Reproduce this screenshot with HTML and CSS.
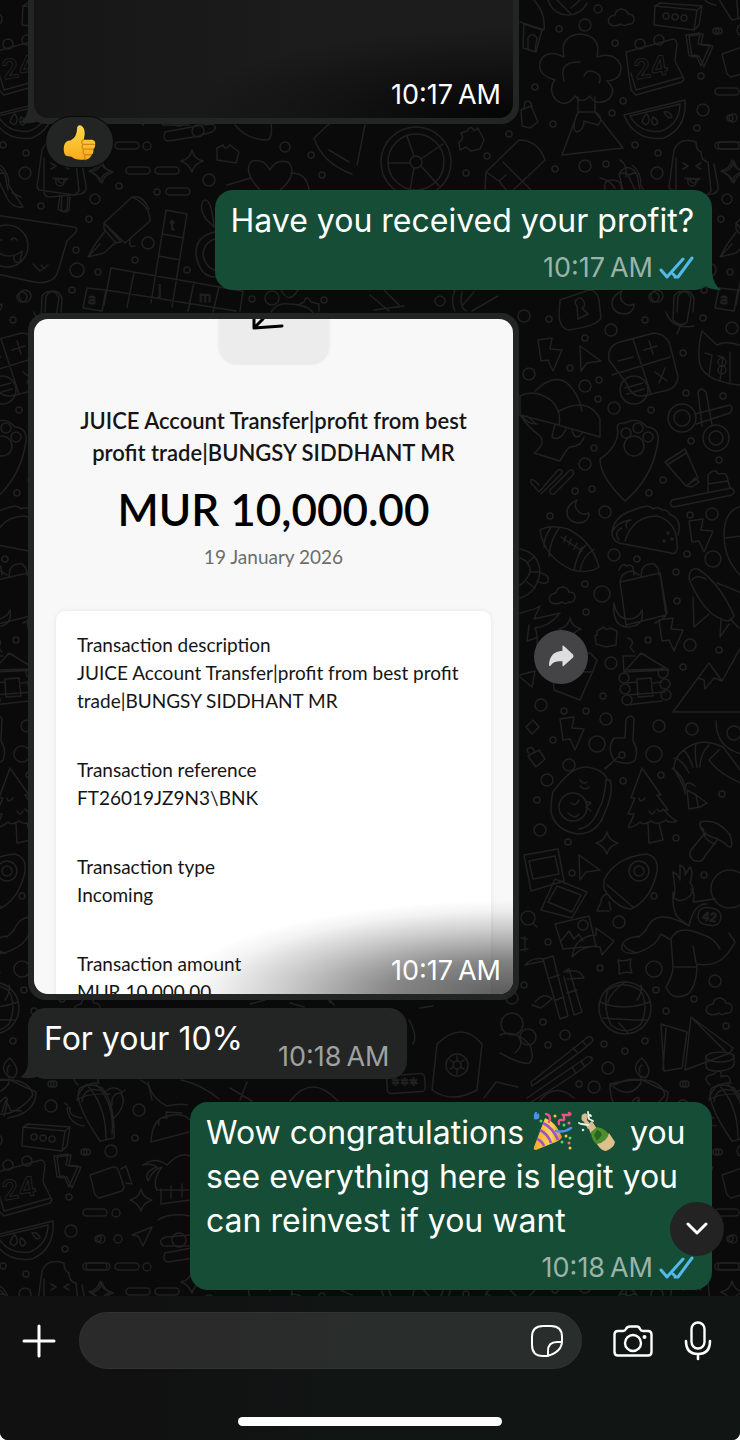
FILE: index.html
```html
<!DOCTYPE html>
<html lang="en">
<head>
<meta charset="utf-8">
<meta name="viewport" content="width=device-width, initial-scale=1">
<title>Chat</title>
<link rel="stylesheet" href="styles.css">
</head>
<body>
<div class="app">
<main class="chat">
<svg class="wallpaper" aria-hidden="true">
<defs>
<path id="bolt" d="M-12-14 2-16 0-5 12-4 3 17-2 6-9 7Z"/>
<path id="spark" d="M0-11Q2-2 11 0Q2 3 0 11Q-3 3-11 0Q-2-2 0-11Z"/>
<path id="cloud" d="M-10 7Q-15 4-11-1Q-8-3-6-3Q-5-9 1-9Q6-8 7-4Q13-4 13 1Q13 7 7 6Q3 9 0 6Q-5 9-10 7Z"/>
<path id="puzzle" d="M-9-6-2-10Q0-6 4-9L11-6 10 8 0 10-10 7-11-1-9-2Z"/>
<path id="cursor" d="M-9-13 12 2-2 4-8 12Z"/>
<rect id="pill" x="-12" y="-4" width="24" height="7" rx="3.5"/>
<path id="moon" d="M-1-12Q-14-6-10 5Q-5 13 6 10Q11 7 11 1Q5 4 1 0Q-5-5-1-12Z"/>
<g id="doodles">
<!-- top band -->
<path d="M534 0Q546 14 544 30L520 22M524 24l18 6-6 22-13-4ZM528 50v-12q4-7 9 0l-2 12M548 0q5 14 19 15q14 0 20-12M557 0l14 14M580 0l-9 8"/>
<use href="#cloud" x="621" y="18"/>
<path d="M655 6l42 4-3 20-40-5ZM697 10l5-4-3 19-5 5M655 6l5-3 42 3"/>
<circle cx="666" cy="16" r="3"/><circle cx="675" cy="17" r="3"/><circle cx="684" cy="18" r="3"/>
<path d="M564 57Q559 36 580 34Q602 36 597 57Q615 51 621 66Q622 80 607 81Q617 90 609 99Q596 107 590 96Q582 105 575 96Q566 109 555 99Q548 88 555 80Q537 75 540 62Q546 48 564 57ZM564 81Q558 61 580 62M584 76Q588 67 598 74Q602 78 599 83M578 97v15M595 97v15M578 112h17L623 148 562 155ZM577 114q-6 16 0 18q7-2 7-11l14 4q6-6-1-12"/>
<path d="M626 52l47-13q3 0 4 5l-2 17 9 18-2 3-46 13-5-5-3-22ZM631 73l5 17 47-13"/>
<circle cx="640" cy="44" r="5"/><circle cx="659" cy="40" r="5"/>
<text x="634" y="77" font-size="27" font-weight="600" transform="rotate(-9 650 68)">24</text>
<use href="#bolt" x="698" y="49"/>
<path d="M722 54l23-8q5 0 6 5l5 15-2 4-23 7-4-3ZM753 48l5-3 6 18-6-1"/>
<path d="M624 115l61-15q2 28-21 38-29 4-40-23ZM630 116l50-12q0 19-18 27-22 3-32-15M642 122q2-7 5-8q5 7-1 11ZM653 117q-3 7 2 8q6-3-2-8M664 112q6-1 8 5-4 3-8-5"/>
<path d="M674 150q5-13 22-8 0 8 5 10 0 9 7 10l3 29-4 4-36-5-2-3ZM692 195l-2 14q6 5 9 0l1-13M683 163l5 3-5 3M701 163l-5 3 5 3M685 178l14 1M688 179q-1 7 4 7 5 0 4-7"/>
<use href="#spark" x="732" y="171"/><use href="#spark" x="192" y="161"/><use href="#spark" x="141" y="79"/>
<use href="#pill" x="727" y="92"/><use href="#pill" x="730" y="146"/><use href="#pill" x="127" y="146"/><use href="#pill" x="138" y="171"/><use href="#pill" x="167" y="171"/><use href="#pill" x="178" y="192"/>
<path d="M485 190l1-18 33-32q19 0 26 20l-38 36M486 172l13 9 8 10M499 181l7-6M503 162l28 28"/>
<circle cx="416" cy="162" r="35"/><circle cx="416" cy="162" r="28"/><circle cx="416" cy="162" r="6"/>
<path d="M414 156l-7-20M421 159l22-15M421 166l18 20M414 168l-4 22M410 163h-22"/>
<path d="M461 133l6-2q4-7 7 0l4-3 6 12-4 9-9 2-5-4-6 3-1-8q6-3 2-9Z"/>
<path d="M521 110l10-4 7 16-8 6-8-2ZM524 108l1-6q5-3 7 4"/>
<path d="M600 178q10 2 15 10M620 160q8 5 6 17M605 190q-2-11 8-10t8 10M619 174q8-13 18 0l-4-1-4 2-5-2ZM619 174l4 16M637 175l3 15"/>
<path d="M165 132l37-7M165 132q-3 8 3 9l32-5M203 125l10-1q5 4-1 8l-11 3"/><circle cx="198" cy="131" r="6"/>
<path d="M235 125q12 15 33 15 5-4 3-16M314 138l15-14M314 138q8 25 38 36M329 150l20 12M365 125l-8 40"/>
<path d="M217 148l6-3q2 6 7 0l9 7-3 11-19-3ZM227 185l24-7M260 190q-18-19-8-29 12-3 18 9 6-11 18-8 11 12-8 28M291 173q16 0 18 17"/>
<path d="M44 158v35q1 4 6 4l30-3q7-1 6-8l-4-22M62 197l-1 13q5 4 8 0l1-13M55 179h13M58 180q3 6 8 0"/>
<use href="#spark" x="102" y="172"/>
<path d="M0 165q9 6 9 21l14 21q-10 2-16-9L-4 175M12 193l9 4"/>
<path d="M104 223l28-26q18 8 18 24l-25 22ZM104 223l17 19-5 1-12-14ZM105 231l-11 15-6 11 16-4 12-11M90 255l10-11M133 197q10-2 16 12M130 240q-2 8 5 6"/>
<path d="M-12 214l86 13q5 1 1 6l-8 8-9 30q-4 14-24 11L-12 272M33 264l7 7 8-6M41 265l4 4"/><circle cx="7" cy="246" r="21"/>
<path d="M-4 240l6 0M11 240q3-4 6 0M-1 253q12 7 23-2M14 256q-1 8 6 6l2-10"/>
<path d="M166 210l21 4-15 93M166 210l-15 93M163 234l21 4M159 256l21 4M111 268l131 23M106 290l130 21M111 268l-7 37M87 288l19 2-4 21-19-3ZM134 273l-7 34M194 282l-6 29M219 287l-6 25M243 291l-3 20"/>
<text x="170" y="230" font-size="14">t</text><text x="158" y="295" font-size="14">j</text><text x="88" y="304" font-size="14">a</text><text x="199" y="302" font-size="14">m</text>
<path d="M203 201q8-6 11 26l-8-8q-7-10-3-18M215 232q-20 4-19 23 4 22 19 22M215 239q-12 4-12 17 4 13 12 14M45 312l1-16q5-8 13-3l3 5-1 14"/>
<path d="M271 312q6-10 18-8 20 1 24 9M300 304l4-2q3-8 7 0l8 2v7M281 290q8 15 17 0"/><circle cx="272" cy="298" r="7"/>
<path d="M370 295l19 16M384 290l15 15M374 310l30-4M455 290q-5 12 0 21M462 292q-3 15 4 19M474 292l-12 14M498 296l-26 15"/>
<path d="M560 300l29-10q8 0 10 10l2 18q-4 8-32 12-9-1-10-15ZM576 300q5-5 8 2 2 4-2 6l6 6-10 5-1-13q-3-3-1-6"/><use href="#moon" x="623" y="303"/>
<path d="M674 296q5-7 14-3l3 5-4 24q-6 6-14-2ZM666 312q6 18 28 14M680 327l-3 7"/>
<!-- right column -->
<use href="#bolt" x="550" y="354"/><use href="#cursor" x="589" y="359"/>
<path d="M620 342l34-9q14 1 17 16l7 28q-1 10-10 13l-25 6q-12 1-16-12L609 360q-2-14 11-18ZM633 339l18 55M612 375l58-18M618 361l15-4M644 350l13-4M649 341l4 13M655 372l12 9M665 368l-6 15M625 388l18-5M627 394l17-5"/><circle cx="634" cy="390" r="14"/>
<path d="M702 331l15 14q10-5 25 1M702 331q-4 14-3 27 0 23 41 27M705 353l7 2-3 20M718 356l5 1-3 24M730 352v32"/><circle cx="722" cy="362" r="4"/><circle cx="722" cy="370" r="4"/>
<path d="M520 396q15-8 32 5 10 11 7 24L520 415ZM535 391q29-28 45 12l2 8M559 411q29-15 41 8l0 18-42-12M520 415q8 12 20 21 6 8-6 17l26 8q7-13 10-14 12-1 14-10M527 416l9 8M555 424l-3 13q8 5 14-8M572 430q3 12 10 3M522 416q7 9 15 8"/>
<path d="M618 431q-3-9 7-8 13-7 22 4 15 1 10 20-6 32-32 54-25-24-25-42 17-11 18-28"/><circle cx="634" cy="446" r="10"/><circle cx="626" cy="433" r="5"/><circle cx="638" cy="428" r="5"/><circle cx="648" cy="437" r="5"/>
<circle cx="682" cy="418" r="14"/><circle cx="682" cy="418" r="8"/><circle cx="716" cy="438" r="13"/><circle cx="716" cy="438" r="7"/>
<path d="M695 414l35-9q4 3 0 8l-34 11M702 426l-4-34q3-6 8 0l6 33"/>
<path d="M665 462l20-13 13 29-12 8ZM667 465l19-12M687 486l8-8 4 4-7 5Z"/>
<path d="M672 500l59-12q6 3 1 7l-58 12q-6-2-2-7M708 492v-17q7-8 10-1 9-2 9 3l3 11M708 484l20-3"/>
<path d="M531 483l8 9 19-22q5-1 4 3l-21 21M531 483q-1-6 4-2l4 4M550 490l20-20q5 0 3 5l-19 19q-5 1-4-4"/>
<use href="#moon" x="578" y="512"/>
<path d="M540 530q10-6 28-1 24 12 31 38-10 7-27 3-28-13-32-40ZM559 528q-9 13-10 28M551 527q-8 13-7 20M594 549q-12 8-14 22M586 545q-9 8-12 25M561 537l21 14M566 536l-2 6M571 539l-2 6M577 543l-3 6M582 547l-3 6"/>
<path d="M625 541q8-25 32-25 22 6 20 34-2 5-6 3l-47-9q-12-1-12-12 2-14 16-20l14-5q8-2 11 2 6-3 9 1 7 0 7 4 14 5 9 21M612 532q5-10 18-12M619 540q-6-8 3-12M627 528q-3-6 4-8"/><circle cx="668" cy="533" r="1"/><circle cx="664" cy="541" r="1"/><circle cx="672" cy="539" r="1"/>
<use href="#bolt" x="701" y="535"/>
<path d="M520 549q19 4 20 23-3 21-20 26M520 558q11 4 10 14-4 10-10 13M530 572l9 0M527 563l7-6M527 582l8 6M541 573q9 2 7 9-5 3-11-1M742 506q-18 4-18 29 0 25 18 42M724 538l18-2"/>
<use href="#cloud" x="562" y="596"/>
<path d="M620 582l40-9 6 42-40 10ZM660 573l7 40q-2 6-12 10M620 582q1-10 12-11l7 4M619 570l2-4q4-3 5 0 5-2 7 1l1 8M641 577q0-15 13-13 5 3 5 11M614 603q3 17 16 16 9-1 12-9 3 16-14 17-16 0-14-24"/>
<path d="M689 579q0-12 9-10 22 14 36 47-5 8-12 3-18-5-33-40M692 580q4-6 14-1M717 583l25 10M693 597l1 30 15-13M721 620l-1 17 9-13M730 619l9 9"/>
<path d="M520 613q14-3 20-7l-6 13 26-6q-11 14-25 15 3 6 2 18M529 625l-2 16 9-3M520 675l15-4-3 16-12-10"/>
<use href="#spark" x="570" y="629"/><use href="#puzzle" x="606" y="637"/><use href="#bolt" x="671" y="634"/>
<path d="M552 668l2 22 26 10 12-27 5-13-7-7-12 2 M555 671l38 1"/>
<path d="M624 672l17-19 28 17ZM624 672l-1-16 12 0M628 638q8 3 2 9l4 5M637 679l14-1 2 18-15 1ZM628 670l35-1M627 683l10-1M653 683l9-1M627 695l38-3M626 705l36-4"/><circle cx="624" cy="678" r="5"/><circle cx="663" cy="673" r="5"/><circle cx="625" cy="689" r="5"/><circle cx="665" cy="684" r="5"/><circle cx="627" cy="700" r="5"/><circle cx="666" cy="695" r="5"/>
<path d="M673 712l36-49 13 18 20-36M673 712h69M698 678l6 2 1 9 9-11 8 3"/>
<use href="#bolt" x="572" y="733"/><use href="#bolt" x="69" y="1171"/>
<path d="M526 727l7-7 6 7-7 7ZM528 756l11-6 6 9-9 8ZM529 753q-4-3 0-5t5 3"/>
<path d="M625 738l1-19q5-6 8 0l-1 22q6 9 2 19-5 6-20 1-9-12-1-23ZM618 757l-13 12M614 761l-9 7"/><circle cx="622" cy="755" r="3"/>
<path d="M553 792q18-26 34-25 18 3 20 13l3 0q4 12-5 32-7 22-28 22-22-4-26-22 0-13 2-20ZM606 780q-1 18-7 29-7 18-20 20M580 780q3 5 7 2M580 786q5 5 9 1"/><circle cx="573" cy="807" r="14"/><path d="M571 803q5 4 8-3M568 813q7 7 11 1M585 801l6 2-5 4 5 4"/>
<path d="M642 768l19 27-4 0 11 15-4 0q8 9 13 11-8 3-11-1-9 6-15 1-8 5-11 1-7 6-12 5 5-9 6-13l-6 0 7-16-4 0ZM648 824l1 19 14-3-4-17M639 798q1 6 6 0M649 811q3 6 6 0M657 809q4 5 6 0"/>
<path d="M695 786q-11-9-10 8 0-7-11-25 0-15 16-23 14-8 33 1l18 24M672 768q9 5 14 20M674 758q8 1 15 15M684 750q5 6 9 17M696 744q-2 9 1 23M709 745q-9 9-9 22M719 750l-10 10q10 14 32 23M687 790l9 5 11 8-7 4-11 2ZM696 795l2 11M716 721q0 27 26 33"/>
<path d="M700 822q18-4 30 13 4 13-1 12-7-7-17-10-13-5-12-15ZM705 833l-14 17q-3 6 2 10 9 4 12-4l13-17M703 828q0 12 12 16"/>
<use href="#spark" x="607" y="843"/><use href="#cursor" x="588" y="868"/>
<path d="M524 855l34-6 6 32-33 10ZM529 861l26-5 4 18-26 5ZM555 879l32 13-15 26-31-8ZM557 886l24 9-9 17-24-10Z"/>
<path d="M604 880q11-23 43-26 14 4 9 22-7 25-25 33-15-1-27-20ZM607 885l26 22M607 894q-6 2-6 8M601 902l-4 9 12 0M609 902l2 8"/><circle cx="639" cy="871" r="10"/><circle cx="639" cy="871" r="5"/>
<circle cx="528" cy="918" r="7"/><path d="M533 923l4 4M555 924l34-8 7 30-33 3ZM561 941l8-10 5 8 5-5 4 7M572 957q3-21 24-22l0-7 18 13-12 14-2-8q-16-3-28 10M521 938l6 1M525 937v14M520 950l8-1"/><circle cx="583" cy="925" r="5"/>
<path d="M618 960q6 2 13-1-2 7 1 14-6-2-13 1 1-7-1-14"/>
<path d="M675 890l-2-18q5 2 7 8l0-15q6 2 5 10l5-8q4 4 0 16 6 5 0 13-10 8-16 2ZM673 892q-1 23 8 28l8 6q5-23 18-22M691 889q5 4 2 13l22-3M689 926q-34-20-43 4l-7 7M640 936q-20 2-18 14 11 9 32-6 5-5 7-10l10 6M624 945q3 6 14 8M671 939q7-15 30-5 14 4 19 15M671 939l2 28q0 8-7 20 6 15 22 7 9-9 9-30 25 5 38-22l-6-9M673 967h24M696 963l-3-17"/><circle cx="730" cy="889" r="19"/><rect x="698" y="908" width="23" height="17" rx="8" transform="rotate(10 709 916)"/><text x="702" y="921" font-size="12" transform="rotate(10 709 916)">42</text>
<path d="M525 965q7-8 19-6l9-3 15 60-8 3-17-60M550 978l9-3M525 965l19-4M556 1000l8-3M564 972l5-3 13 43-8 3-10-38M567 993l10-3M567 972q12-4 17 6l-17 1M535 1002q10-11 17-3l-11 9-9-3"/>
<circle cx="625" cy="1008" r="26"/><path d="M608 990q16-11 33 1 8 15 0 33-14 13-30 1-9-19-3-35ZM600 1002q22 10 50 0M603 1018q24 2 44 2M625 982q-15 11-17 20M637 1000q6-9 4-15M619 1023l9 10"/>
<use href="#cloud" x="719" y="1007"/>
<path d="M661 1024l26 8-5 36-18 3ZM666 1028l-3 42M691 1017l42 31-3 5-45 17ZM692 1018l33 33M706 1056v11q3 5 15 4 14-2 13-9v-7"/><ellipse cx="720" cy="1057" rx="14" ry="5"/>
<path d="M531 1082l57-45q4-1 5 3-1 5-61 46ZM527 1098l60-41q6-1 5 3-4 7-64 44M573 1048l5 5M582 1041l5 5M572 1067l4 6M581 1061l4 6"/>
<path d="M640 1076q-10-9 2-18 12 13 3 20ZM640 1073q-2-6 2-8M610 1084q16-4 31-4l4 0q17 2 20 15M610 1084q19 17 31-1v-7M610 1085q0 24 17 29 21 3 38-19"/>
<path d="M710 1085q-8-8 0-10l4-1q8-8 7 3 10-4 9 6M709 1100q4-18 22-17M709 1100q9-7 33-6"/>
<path d="M500 1035q15-6 30 10 5 14-1 18-7 2-29-10M515 1053q9-8 4-16"/><circle cx="512" cy="1024" r="11"/><circle cx="528" cy="1037" r="8"/>
<!-- lower left -->
<path d="M80 1088q10-6 22 0 13 15 12 50l-14 3Q72 1100 80 1088ZM86 1084q20 20 20 55M96 1084q19 20 16 50M82 1118q-14-2-12-10l-3 0q2 16 17 18M112 1105q-1-12 9-12 7 12-8 26M121 1093l4-3M68 1106l-3-3"/>
<path d="M0 1102q12-14 4 14M-18 1085q14-8 28-5 13 6 26 12 0 21-28 26M2 1112l4-12 5 11q6-1 10 0"/>
<path d="M141 1080l8 6q4 13 18 20 14-3 20-1M151 1142q1-24 17-26 16-4 22 4M151 1142l38-10M159 1125q-2-9 8-7l-1-6 16 1M181 1080q20 4 38 19"/>
<path d="M143 1165q12-9 24 0 13-14 23-9M143 1165q9-2 14 2-14 5-9 14 5-12 14-14-10 13-5 23h32M161 1189l0 15 29-4M171 1186v12M182 1184v13M158 1220q12-8 32-4"/>
<path d="M132 1235l20-8-9 19-5-10Z"/><use href="#pill" x="95" y="1267"/>
<path d="M190 1235l-24 2q-9 3-3 9l26 0"/><circle cx="179" cy="1240" r="7"/>
<!-- beneath the picture message -->
<path d="M250 1004l15-4M290 1003l14 4M330 1003q-4-9 4 2M420 1008l13-2M409 1020q9 16 4 24M437 1044q25-24 45 0l-5 46q-25 14-45 0ZM457 1056v5M464 1060l-4 3M464 1069l-4-2M457 1074v-5M450 1069l4-2M450 1060l4 3"/>
<circle cx="457" cy="1065" r="4"/><circle cx="457" cy="1065" r="11"/>
<rect x="387" y="1075" width="38" height="18" rx="4" transform="rotate(-4 400 1084)"/><text x="391" y="1092" font-size="18">***</text>
<path d="M82 1102q2-18 23-10 9-8 17 0M148 1082l4 18M230 1088l22 13M240 1100l7-18M290 1101q22-28 48 0M484 1098l12-16 22 5M540 1100q16-18 34-2"/>
<!-- confetti bubbles -->
<g>
<circle cx="585" cy="25" r="6"/><circle cx="598" cy="9" r="4"/><circle cx="559" cy="29" r="3"/><circle cx="615" cy="43" r="3"/><circle cx="535" cy="87" r="3"/><circle cx="553" cy="124" r="3"/><circle cx="623" cy="101" r="3"/><circle cx="612" cy="113" r="3"/><circle cx="701" cy="76" r="3"/><circle cx="703" cy="110" r="6"/><circle cx="697" cy="128" r="3"/><circle cx="730" cy="118" r="3"/><circle cx="716" cy="31" r="3"/><circle cx="635" cy="145" r="3"/><circle cx="658" cy="153" r="3"/><circle cx="585" cy="166" r="6"/><circle cx="606" cy="164" r="3"/><circle cx="657" cy="173" r="6"/><circle cx="555" cy="169" r="3"/><circle cx="509" cy="134" r="3"/><circle cx="487" cy="156" r="3"/><circle cx="466" cy="173" r="3"/><circle cx="727" cy="199" r="5"/>
<circle cx="147" cy="146" r="4"/><circle cx="119" cy="186" r="3"/><circle cx="157" cy="192" r="3"/><circle cx="209" cy="180" r="6"/><circle cx="285" cy="147" r="5"/><circle cx="311" cy="155" r="3"/><circle cx="322" cy="175" r="3"/><circle cx="41" cy="206" r="3"/><circle cx="89" cy="219" r="3"/><circle cx="76" cy="250" r="3"/><circle cx="148" cy="243" r="6"/><circle cx="135" cy="260" r="3"/><circle cx="77" cy="270" r="7"/><circle cx="98" cy="272" r="3"/><circle cx="72" cy="290" r="3"/><circle cx="25" cy="296" r="6"/><circle cx="187" cy="270" r="3"/><circle cx="252" cy="299" r="3"/><circle cx="324" cy="300" r="3"/><circle cx="440" cy="301" r="5"/><circle cx="654" cy="297" r="5"/>
<circle cx="524" cy="316" r="6"/><circle cx="549" cy="319" r="3"/><circle cx="611" cy="330" r="6"/><circle cx="645" cy="320" r="3"/><circle cx="703" cy="318" r="3"/><circle cx="732" cy="328" r="6"/><circle cx="585" cy="338" r="3"/><circle cx="683" cy="353" r="3"/><circle cx="529" cy="374" r="6"/><circle cx="570" cy="368" r="3"/><circle cx="585" cy="386" r="6"/><circle cx="599" cy="380" r="3"/><circle cx="598" cy="399" r="3"/><circle cx="614" cy="408" r="6"/><circle cx="651" cy="410" r="3"/><circle cx="686" cy="393" r="3"/><circle cx="723" cy="396" r="3"/><circle cx="594" cy="448" r="3"/><circle cx="585" cy="464" r="6"/><circle cx="691" cy="441" r="3"/><circle cx="719" cy="460" r="3"/><circle cx="663" cy="480" r="3"/><circle cx="575" cy="491" r="3"/><circle cx="592" cy="489" r="3"/><circle cx="649" cy="493" r="3"/><circle cx="550" cy="516" r="3"/><circle cx="605" cy="512" r="6"/><circle cx="690" cy="515" r="3"/><circle cx="712" cy="514" r="6"/><circle cx="614" cy="555" r="6"/><circle cx="637" cy="559" r="3"/><circle cx="687" cy="554" r="3"/><circle cx="713" cy="559" r="8"/><circle cx="585" cy="584" r="3"/><circle cx="602" cy="594" r="8"/><circle cx="676" cy="572" r="3"/><circle cx="677" cy="601" r="3"/><circle cx="586" cy="612" r="3"/><circle cx="648" cy="640" r="3"/><circle cx="690" cy="645" r="6"/><circle cx="719" cy="650" r="3"/><circle cx="611" cy="663" r="6"/><circle cx="683" cy="667" r="3"/>
<circle cx="541" cy="705" r="6"/><circle cx="603" cy="696" r="3"/><circle cx="564" cy="711" r="3"/><circle cx="586" cy="711" r="3"/><circle cx="606" cy="719" r="6"/><circle cx="659" cy="726" r="6"/><circle cx="692" cy="729" r="6"/><circle cx="553" cy="740" r="3"/><circle cx="597" cy="744" r="8"/><circle cx="654" cy="754" r="8"/><circle cx="734" cy="733" r="7"/><circle cx="569" cy="765" r="6"/><circle cx="547" cy="780" r="6"/><circle cx="537" cy="800" r="3"/><circle cx="623" cy="781" r="3"/><circle cx="661" cy="775" r="3"/><circle cx="722" cy="794" r="3"/><circle cx="540" cy="830" r="6"/><circle cx="568" cy="842" r="3"/><circle cx="676" cy="838" r="3"/><circle cx="572" cy="873" r="3"/><circle cx="654" cy="896" r="3"/><circle cx="704" cy="875" r="3"/><circle cx="619" cy="922" r="6"/><circle cx="548" cy="942" r="3"/><circle cx="600" cy="968" r="3"/><circle cx="654" cy="969" r="8"/><circle cx="715" cy="981" r="6"/><circle cx="656" cy="990" r="3"/><circle cx="694" cy="999" r="3"/><circle cx="524" cy="985" r="3"/><circle cx="512" cy="998" r="6"/><circle cx="666" cy="1011" r="3"/><circle cx="543" cy="1022" r="3"/><circle cx="565" cy="1035" r="5"/><circle cx="548" cy="1045" r="3"/><circle cx="604" cy="1044" r="3"/><circle cx="645" cy="1041" r="3"/><circle cx="625" cy="1051" r="3"/><circle cx="726" cy="1026" r="3"/><circle cx="608" cy="1068" r="6"/><circle cx="579" cy="1084" r="3"/><circle cx="594" cy="1087" r="6"/><circle cx="683" cy="1084" r="3"/>
<circle cx="54" cy="1084" r="3"/><circle cx="51" cy="1106" r="6"/><circle cx="139" cy="1110" r="6"/><circle cx="135" cy="1138" r="3"/><circle cx="87" cy="1152" r="3"/><circle cx="111" cy="1151" r="6"/><circle cx="116" cy="1213" r="4"/><circle cx="101" cy="1239" r="4"/><circle cx="118" cy="1239" r="4"/>
</g>
</g>
</defs>
<use href="#doodles" x="-632" y="-1121"/><use href="#doodles" y="-1121"/><use href="#doodles" x="632" y="-1121"/>
<use href="#doodles" x="-632"/><use href="#doodles"/><use href="#doodles" x="632"/>
<use href="#doodles" x="-632" y="1121"/><use href="#doodles" y="1121"/>
</svg>

<article class="photo-message photo-message--first">
  <div class="photo-bubble photo-bubble--cut">
    <div class="photo photo--dark"><time class="time time--photo">10:17&#8239;AM</time></div>
    <svg class="tail tail--in" viewBox="0 0 20 18" aria-hidden="true"><path d="M8 0Q8 12 0 16Q8 19 20 15Z"/></svg>
  </div>
  <button class="reaction" type="button" aria-label="Thumbs up reaction">
    <svg viewBox="0 0 36 38" aria-hidden="true">
      <defs><linearGradient id="skin" x1="0" y1="0" x2="0" y2="1"><stop offset="0" stop-color="#ffd94a"/><stop offset="1" stop-color="#f7ab1c"/></linearGradient></defs>
      <path fill="url(#skin)" d="M15 3Q16 0 19 1Q23 3 23 10L22 16L31 16Q35 17 34 21Q34 25 32 26Q33 31 30 32Q29 37 23 37Q13 38 9 34L3 33Q0 30 1 23Q2 17 8 17Q15 13 15 3Z"/>
      <path fill="none" stroke="#d9880f" stroke-width="1.4" stroke-linecap="round" d="M22 16Q18 18 21 21H33M21 21Q19 25 22 26H32M22 26Q20 30 23 32H30M23 32Q22 35 24 37"/>
    </svg>
  </button>
</article>

<article class="bubble bubble--out">
  <p class="text">Have you received your profit?</p>
  <p class="meta"><time class="time">10:17&#8239;AM</time>
    <svg class="ticks" role="img" aria-label="Read" viewBox="0 0 35 24"><path d="M2 14L8 21L24 3M16 21L19 21L33 2M14 18L17 21"/></svg></p>
  <svg class="tail tail--out" viewBox="0 0 20 18" aria-hidden="true"><path d="M11 0Q12 12 20 18Q10 18 4 14L0 18Z"/></svg>
</article>

<article class="photo-message photo-message--row">
  <div class="photo-bubble">
    <div class="photo receipt">
      <div class="receipt-icon"><svg viewBox="0 0 34 12" aria-hidden="true"><path d="M3 0V9L31 7M3 9L12 0"/></svg></div>
      <h2 class="receipt-title">JUICE Account Transfer|profit from best profit trade|BUNGSY SIDDHANT MR</h2>
      <p class="receipt-amount">MUR 10,000.00</p>
      <p class="receipt-date">19 January 2026</p>
      <dl class="receipt-card">
        <div><dt>Transaction description</dt><dd>JUICE Account Transfer|profit from best profit trade|BUNGSY SIDDHANT MR</dd></div>
        <div><dt>Transaction reference</dt><dd>FT26019JZ9N3\BNK</dd></div>
        <div><dt>Transaction type</dt><dd>Incoming</dd></div>
        <div><dt>Transaction amount</dt><dd>MUR 10,000.00</dd></div>
      </dl>
      <time class="time time--photo">10:17&#8239;AM</time>
    </div>
  </div>
  <button class="forward" type="button" aria-label="Forward">
    <svg viewBox="0 0 28 26" aria-hidden="true"><path d="M15 2.500Q15 1 16.500 2L26 11Q27 12.500 26 14L16.500 22.500Q15 24 15 22V18Q6 17 2.500 22.500Q1 24 1 21Q2 8 15 7Z"/></svg>
  </button>
</article>

<article class="bubble bubble--in">
  <p class="text">For your 10%</p>
  <time class="time">10:18&#8239;AM</time>
  <svg class="tail tail--in" viewBox="0 0 20 18" aria-hidden="true"><path d="M8 0Q8 12 0 16Q8 19 20 15Z"/></svg>
</article>

<article class="bubble bubble--out">
  <p class="text">Wow congratulations <svg class="emoji" role="img" aria-label="Party popper" viewBox="0 0 40 40">
    <defs><linearGradient id="cone" x1="0" y1="0" x2="1" y2="0"><stop offset="0" stop-color="#f5a623"/><stop offset=".6" stop-color="#ffd65a"/><stop offset="1" stop-color="#e58f1c"/></linearGradient></defs>
    <path fill="url(#cone)" d="M12 7Q23 11 29 26Q27 30 20 32L3 39Q0 39 1 36Z"/>
    <path fill="none" stroke="#9a56c9" stroke-width="2.600" d="M10 12Q20 17 25 29M7 19Q15 23 18 32M4 28Q9 30 11 35"/>
    <path fill="none" stroke="#ee5584" stroke-width="2.400" stroke-linecap="round" d="M13 3Q19 4 16 11M26 13Q25 8 29 9T30 4L36 4Q39 3 36 2"/>
    <path fill="none" stroke="#4c92ea" stroke-width="2.400" stroke-linecap="round" d="M3 2Q0 7 5 4Q6 8 2 7M23 20Q31 22 38 17"/>
    <g fill="#f6c944"><circle cx="22" cy="5" r="1.500"/><circle cx="33" cy="25" r="1.500"/><circle cx="37" cy="37" r="1.500"/></g>
    <g fill="#5bd06d"><circle cx="8" cy="10" r="1.500"/><circle cx="31" cy="14" r="1.500"/><circle cx="37" cy="27" r="1.500"/><circle cx="29" cy="31" r="1.500"/></g>
    <g fill="#ef6a90"><circle cx="36" cy="12" r="1.500"/><circle cx="36" cy="32" r="1.500"/></g>
  </svg><svg class="emoji emoji--bottle" role="img" aria-label="Champagne bottle" viewBox="0 0 40 40">
    <path fill="#d6bc8d" d="M5 4Q9 0 11 5L10 9L15 15L11 18L7 11Q3 9 5 4Z"/>
    <path fill="#d9bd8c" d="M10 14L15 10L20 18L14 23Z"/>
    <path fill="#4f8d2f" d="M14 21L20 16Q29 18 33 25L22 35Q14 30 14 21Z"/>
    <path fill="#2b641f" d="M17 24L20 19Q24 20 25 24L20 30Z"/>
    <path fill="#dcc18d" d="M20 33Q30 31 32 22L38 31Q37 37 29 40Q24 40 20 33Z"/>
    <path fill="none" stroke="#eef4e8" stroke-width="1.800" stroke-linecap="round" d="M11 1L12 8L16 10M5 13L11 14M2 12L4 13M13 4L14 5"/>
    <circle cx="6" cy="19" r="1.300" fill="#d8e8d8"/>
  </svg> you see everything here is legit you can reinvest if you want</p>
  <p class="meta"><time class="time">10:18&#8239;AM</time>
    <svg class="ticks" role="img" aria-label="Read" viewBox="0 0 35 24"><path d="M2 14L8 21L24 3M16 21L19 21L33 2M14 18L17 21"/></svg></p>
</article>

<button class="scroll-down" type="button" aria-label="Scroll to latest">
  <svg viewBox="0 0 22 14" aria-hidden="true"><path d="M2 2L11 11L20 2"/></svg>
</button>
</main>

<footer class="composer">
  <form class="composer-row">
    <button class="icon-button" type="button" aria-label="Attach"><svg width="34" height="34" viewBox="0 0 34 34"><path d="M17 2V32M2 17H32" stroke-width="3"/></svg></button>
    <div class="field">
      <input type="text" aria-label="Message">
      <button class="icon-button" type="button" aria-label="Stickers"><svg width="32" height="32" viewBox="0 0 32 32"><path d="M31 16V12Q31 1 20 1H12Q1 1 1 12V20Q1 31 12 31H16Q31 27 31 16ZM17 31V26Q17 17 26 17H31" stroke-width="2"/></svg></button>
    </div>
    <div class="actions">
      <button class="icon-button" type="button" aria-label="Camera"><svg width="40" height="32" viewBox="0 0 40 32"><path d="M5 6H10Q12 6 13 4Q14 1.500 17 1.500H24Q26 1.500 27 4Q28 6 30 6H35Q38.500 6 38.500 9.500V27Q38.500 30.500 35 30.500H5Q1.500 30.500 1.500 27V9.500Q1.500 6 5 6Z" stroke-width="2.400"/><circle cx="20" cy="18" r="8" stroke-width="2.400"/><circle cx="31.500" cy="12" r="1" stroke-width="2"/></svg></button>
      <button class="icon-button" type="button" aria-label="Voice message"><svg width="28" height="40" viewBox="0 0 28 40"><rect x="7.500" y="1.500" width="13" height="26" rx="6.500" stroke-width="2.400"/><path d="M2 20Q2 33 14 33Q26 33 26 20M14 33V38" stroke-width="2.600"/></svg></button>
    </div>
  </form>
  <div class="home-indicator"></div>
</footer>
</div>
</body>
</html>
```
FILE: styles.css
```css
* { box-sizing: border-box; }
html { background: #fff; }
body { margin: 0; font-family: Inter, "Liberation Sans", sans-serif; color: #fff; }
p, h2, dl, dd { margin: 0; }
button { border: 0; padding: 0; background: none; color: inherit; font: inherit; cursor: pointer; }
svg { display: block; }

.app {
  display: flex;
  flex-direction: column;
  min-height: 100vh;
  overflow: hidden;
  background: #0a0a0a;
  border-radius: 0 0 8px 8px;
}

.chat {
  position: relative;
  flex: 1;
  display: flex;
  flex-direction: column;
  align-items: flex-start;
  padding: 0 28px 6px;
  overflow: hidden;
}
.wallpaper {
  position: absolute;
  inset: 0;
  width: 100%;
  height: 100%;
  fill: none;
  stroke: #212121;
  stroke-width: 1.5;
  stroke-linejoin: round;
  stroke-linecap: round;
  font-family: Inter, sans-serif;
}
.wallpaper text { stroke-width: 1; }

.bubble {
  position: relative;
  max-width: 522px;
  padding: 9px 18px 6px 16px;
  border-radius: 18px;
}
.bubble--out { align-self: flex-end; background: #154d37; }
.bubble--in { display: flex; align-items: flex-end; gap: 35px; margin: 8px 0 23px; background: #232524; }
.bubble--in .text { padding-bottom: 12px; }
.text { font-size: 32px; line-height: 44px; }
.meta { display: flex; justify-content: flex-end; align-items: center; gap: 6px; margin-top: 9px; }
.time { font-size: 27px; line-height: 32px; color: #a0a1a1; }
.bubble--out .time { color: #9bb3a8; }
.ticks { width: 35px; height: 24px; fill: none; stroke: #53b9e8; stroke-width: 3; stroke-linecap: round; stroke-linejoin: round; }

.tail { position: absolute; width: 20px; height: 18px; bottom: 0; }
.tail--in { left: -8px; fill: #232524; }
.tail--out { right: -9px; fill: #154d37; }

.emoji { display: inline-block; width: 40px; height: 40px; vertical-align: -7px; }
.emoji--bottle { margin-left: 4px; margin-right: 4px; }

.photo-message { position: relative; display: flex; max-width: 100%; }
.photo-message--first { flex-direction: column; align-items: flex-start; margin-bottom: 23px; }
.photo-message--row { align-items: center; gap: 15px; margin-top: 23px; }
.photo-bubble { position: relative; padding: 6px; border-radius: 18px; background: #232524; width: 491px; }
.photo-bubble--cut { padding-top: 0; border-radius: 0 0 18px 18px; }
.photo { position: relative; overflow: hidden; border-radius: 14px; }
.photo--dark {
  height: 118px;
  border-radius: 0 0 14px 14px;
  background: radial-gradient(ellipse 330px 90px at 100% 100%, rgba(0, 0, 0, .85), rgba(0, 0, 0, .4) 50%, transparent), linear-gradient(90deg, #161616, #1c1c1c 60%);
}
.time--photo { position: absolute; right: 12px; bottom: 7px; color: #fff; }

.reaction {
  display: grid;
  place-items: center;
  position: relative;
  width: 67px;
  height: 50px;
  margin: -7px 0 0 18px;
  border-radius: 25px;
  background: #232524;
  box-shadow: 0 0 0 1px #0a0a0a;
}
.reaction svg { width: 34px; height: 37px; }

.receipt { height: 675px; padding: 0 21px; background: #f8f8f8; color: #151515; font-family: Lato, "Open Sans", sans-serif; text-align: center; }
.receipt::after {
  content: "";
  position: absolute;
  inset: 0;
  background: radial-gradient(ellipse 340px 94px at 100% 100%, rgba(0, 0, 0, .64), rgba(0, 0, 0, .48) 35%, rgba(0, 0, 0, .2) 68%, rgba(0, 0, 0, .05) 88%, transparent);
}
.receipt .time { z-index: 1; font-family: Inter, sans-serif; }
.receipt-icon {
  width: 110px;
  height: 44px;
  margin: 0 auto 42px;
  padding-left: 32px;
  border-radius: 0 0 18px 18px;
  background: #ececec;
  box-shadow: 0 1px 3px #e2e2e2;
}
.receipt-icon svg { width: 34px; height: 12px; fill: none; stroke: #000; stroke-width: 3; stroke-linejoin: round; stroke-linecap: round; }
.receipt-title { padding: 0 20px; font-size: 22px; line-height: 32px; font-weight: 600; }
.receipt-amount { margin-top: 12px; font-size: 44px; line-height: 56px; font-weight: 600; color: #000; }
.receipt-date { margin-top: 6px; font-size: 19px; line-height: 28px; color: #6d6d6d; }
.receipt-card {
  display: grid;
  gap: 41px;
  margin-top: 39px;
  padding: 20px 21px;
  border: 1px solid #f0f0f0;
  border-radius: 10px;
  background: #fff;
  box-shadow: 0 0 4px #ececec;
  font-size: 19px;
  line-height: 28px;
  text-align: left;
}

.forward { display: grid; place-items: center; width: 54px; height: 54px; border-radius: 50%; background: #444446; flex: none; }
.forward svg { width: 27px; height: 25px; fill: #dedee0; }
.scroll-down {
  position: absolute;
  right: 16px;
  bottom: 40px;
  display: grid;
  place-items: center;
  width: 54px;
  height: 54px;
  border-radius: 50%;
  background: #232323;
}
.scroll-down svg { width: 22px; height: 14px; fill: none; stroke: #fff; stroke-width: 3; stroke-linecap: round; stroke-linejoin: round; }

.composer { padding: 16px 0 14px; background: linear-gradient(90deg, #111 20%, #111615 50%); }
.composer-row { display: flex; align-items: center; padding: 0 28px 0 22px; }
.icon-button svg { fill: none; stroke: #fff; stroke-linecap: round; stroke-linejoin: round; }
.field {
  flex: 1;
  display: flex;
  align-items: center;
  min-width: 0;
  margin: 0 31px 0 23px;
  padding-right: 18px;
  border: 1px solid #303332;
  border-radius: 29px;
  background: linear-gradient(90deg, #2a2a2a 30%, #292e2c 60%);
}
.field input { flex: 1; min-width: 0; height: 55px; padding: 0 20px; border: 0; outline: 0; background: none; color: #fff; font: 32px Inter, sans-serif; }
.actions { display: flex; align-items: center; gap: 31px; }
.home-indicator { width: 264px; max-width: 60%; height: 9px; margin: 48px auto 0; border-radius: 5px; background: #fff; }
```
